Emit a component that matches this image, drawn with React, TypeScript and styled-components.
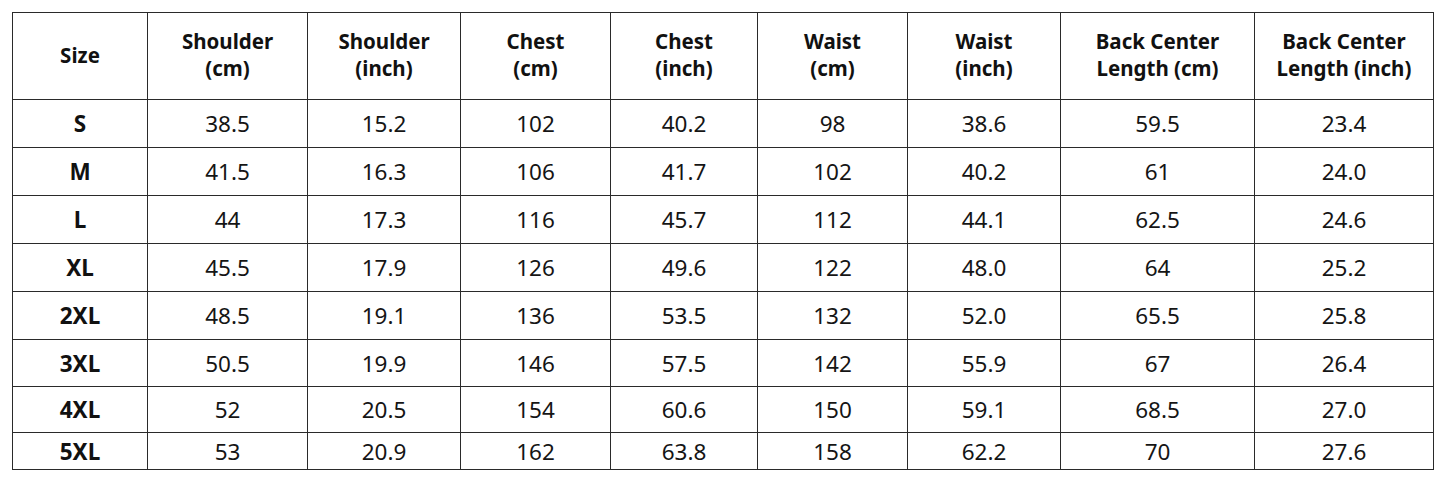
import React from 'react'
import styled, { createGlobalStyle } from 'styled-components'

const GlobalStyle = createGlobalStyle`
	html, body {
		margin: 0;
		padding: 0;
		background: #ffffff;
	}
	body {
		font-family: 'Noto Sans', 'Open Sans', 'Noto Sans CJK SC', sans-serif;
		color: #111;
	}
`

const columns = [
	{ label: ['Size'], width: 135 },
	{ label: ['Shoulder', '(cm)'], width: 160 },
	{ label: ['Shoulder', '(inch)'], width: 153 },
	{ label: ['Chest', '(cm)'], width: 150 },
	{ label: ['Chest', '(inch)'], width: 147 },
	{ label: ['Waist', '(cm)'], width: 150 },
	{ label: ['Waist', '(inch)'], width: 153 },
	{ label: ['Back Center', 'Length (cm)'], width: 194 },
	{ label: ['Back Center', 'Length (inch)'], width: 179 },
]

const rows: { size: string; h: number; values: string[] }[] = [
	{ size: 'S', h: 48, values: ['38.5', '15.2', '102', '40.2', '98', '38.6', '59.5', '23.4'] },
	{ size: 'M', h: 48, values: ['41.5', '16.3', '106', '41.7', '102', '40.2', '61', '24.0'] },
	{ size: 'L', h: 48, values: ['44', '17.3', '116', '45.7', '112', '44.1', '62.5', '24.6'] },
	{ size: 'XL', h: 48, values: ['45.5', '17.9', '126', '49.6', '122', '48.0', '64', '25.2'] },
	{ size: '2XL', h: 48, values: ['48.5', '19.1', '136', '53.5', '132', '52.0', '65.5', '25.8'] },
	{ size: '3XL', h: 47, values: ['50.5', '19.9', '146', '57.5', '142', '55.9', '67', '26.4'] },
	{ size: '4XL', h: 46, values: ['52', '20.5', '154', '60.6', '150', '59.1', '68.5', '27.0'] },
	{ size: '5XL', h: 37, values: ['53', '20.9', '162', '63.8', '158', '62.2', '70', '27.6'] },
]

export default function App() {
	return (
		<Page>
			<GlobalStyle />
			<SizeTable>
				<colgroup>
					{columns.map((c, i) => (
						<col key={i} style={{ width: c.width }} />
					))}
				</colgroup>
				<thead>
					<tr>
						{columns.map((c, i) => (
							<HeadCell key={i}>
								{c.label.map((line, j) => (
									<Line key={j}>{line}</Line>
								))}
							</HeadCell>
						))}
					</tr>
				</thead>
				<tbody>
					{rows.map(r => (
						<Row key={r.size} style={{ height: r.h }}>
							<SizeCell>{r.size}</SizeCell>
							{r.values.map((v, i) => (
								<Cell key={i}>{v}</Cell>
							))}
						</Row>
					))}
				</tbody>
			</SizeTable>
		</Page>
	)
}

const Page = styled.main`
	width: 1445px;
	height: 482px;
	padding: 12px 0 0 12px;
	box-sizing: border-box;
	background: #fff;
`

const SizeTable = styled.table`
	border-collapse: collapse;
	table-layout: fixed;
	width: 1421px;
	border: 1.5px solid #2a2a2a;
	td,
	th {
		border: 1.3px solid #2a2a2a;
		text-align: center;
		vertical-align: middle;
		padding: 0;
	}
`

const HeadCell = styled.th`
	height: 84px;
	font-size: 20.5px;
	font-weight: 700;
	line-height: 27px;
	color: #111;
	padding-bottom: 2px !important;
`

const Line = styled.div`
	white-space: nowrap;
`

const Row = styled.tr``

const Cell = styled.td`
	font-size: 22.5px;
	font-weight: 400;
	color: #151515;
	line-height: 1;
	padding-top: 2px !important;
`

const SizeCell = styled.td`
	font-size: 22.5px;
	font-weight: 700;
	color: #111;
	line-height: 1;
	padding-top: 2px !important;
`
